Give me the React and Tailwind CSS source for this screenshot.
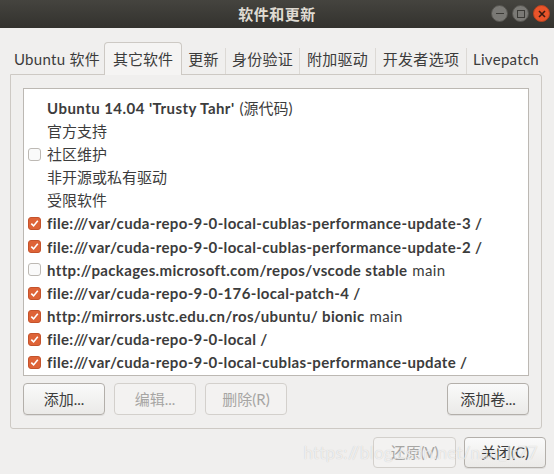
import React from "react";

const font = { fontFamily: "Lato, 'Noto Sans CJK SC', sans-serif" };

const tabs = [
  { label: "Ubuntu 软件", w: "w-[94px]" },
  { label: "其它软件", w: "w-[78px]", active: true },
  { label: "更新", w: "w-[43px]" },
  { label: "身份验证", w: "w-[73px]" },
  { label: "附加驱动", w: "w-[75px]" },
  { label: "开发者选项", w: "w-[90px]" },
  { label: "Livepatch", w: "w-[78px]" },
];

const sources = [
  { check: true, text: "file:///var/cuda-repo-9-0-local-cublas-performance-update-3 /" },
  { check: true, text: "file:///var/cuda-repo-9-0-local-cublas-performance-update-2 /" },
  { check: false, text: "http://packages.microsoft.com/repos/vscode stable", extra: "main" },
  { check: true, text: "file:///var/cuda-repo-9-0-176-local-patch-4 /" },
  { check: true, text: "http://mirrors.ustc.edu.cn/ros/ubuntu/ bionic", extra: "main" },
  { check: true, text: "file:///var/cuda-repo-9-0-local /" },
  { check: true, text: "file:///var/cuda-repo-9-0-local-cublas-performance-update /" },
];

const Checkbox = ({ checked }) =>
  checked ? (
    <div className="w-[13px] h-[13px] rounded-[3px] bg-[#de6337] border border-[#c4532c] flex items-center justify-center">
      <svg width="9" height="9" viewBox="0 0 9 9">
        <path d="M1.3 4.6 L3.6 6.9 L7.8 1.8" fill="none" stroke="#fff" strokeWidth="1.6" />
      </svg>
    </div>
  ) : (
    <div className="w-[13px] h-[13px] rounded-[3px] bg-[#fafafa] border border-[#bdb9b4]" />
  );

const Button = ({ children, disabled, className = "" }) => (
  <div
    className={`flex items-center justify-center rounded-[4px] border text-[15px] ${
      disabled
        ? "border-[#d3d0cc] bg-[#f3f2f1] text-[#a6a5a3]"
        : "border-[#b3afaa] bg-gradient-to-b from-[#fafafa] to-[#ebeae8] text-[#3c3c3c] shadow-[0_1px_0_rgba(0,0,0,0.07)]"
    } ${className}`}
  >
    {children}
  </div>
);

export default function App() {
  return (
    <div style={font} className="w-[554px] h-[474px] bg-[#f0efee] flex flex-col overflow-hidden">
      {/* title bar */}
      <div className="relative h-[28px] bg-gradient-to-b from-[#45443f] to-[#33322e] flex items-center justify-center">
        <span className="text-[15px] font-bold text-[#dfdbd2] tracking-[0.5px]">软件和更新</span>
        <div className="absolute right-[4px] top-[5px] flex gap-[4px]">
          <div className="w-[17px] h-[17px] rounded-full bg-[#7a7975] border border-[#55544f] flex items-center justify-center">
            <div className="w-[8px] h-[1.5px] bg-[#3b3a36]" />
          </div>
          <div className="w-[17px] h-[17px] rounded-full bg-[#7a7975] border border-[#55544f] flex items-center justify-center">
            <div className="w-[8px] h-[8px] border-[1.5px] border-[#3b3a36]" />
          </div>
          <div className="w-[17px] h-[17px] rounded-full bg-[#e9542a] border border-[#b8421f] flex items-center justify-center">
            <svg width="8" height="8" viewBox="0 0 8 8">
              <path d="M1 1 L7 7 M7 1 L1 7" stroke="#3b1a10" strokeWidth="1.6" />
            </svg>
          </div>
        </div>
      </div>

      {/* tabs */}
      <div className="mt-[14px] ml-[10px] flex h-[32px] text-[15px] text-[#3c3c3c]">
        {tabs.map((t, i) => (
          <div key={t.label} className="flex">
            {t.active ? (
              <div
                className={`${t.w} relative z-10 -mb-px rounded-t-[4px] border border-b-0 border-[#cdc9c4] bg-[#f5f4f3] flex items-center justify-center`}
              >
                {t.label}
              </div>
            ) : (
              <div className={`${t.w} flex items-center justify-center pt-[2px] tracking-[0.3px]`}>{t.label}</div>
            )}
            {!t.active && i < tabs.length - 1 && !tabs[i + 1].active && (
              <div className="w-px h-[26px] mt-[6px] bg-[#dcd9d5]" />
            )}
          </div>
        ))}
      </div>

      {/* notebook panel */}
      <div className="ml-[10px] w-[532px] h-[355px] border border-[#cdc9c4] rounded-b-[3px] rounded-tr-[3px] px-[12px] pt-[13px]">
        <div className="h-[288px] bg-white border border-[#bcb8b3] pt-[8px] text-[15px] text-[#3c3c3c]">
          <div className="h-[23px] flex items-center pl-[23px]">
            <span className="font-bold tracking-[0.45px]">Ubuntu 14.04 'Trusty Tahr'</span>
            <span className="ml-[5px]">(源代码)</span>
          </div>
          {["官方支持", "社区维护", "非开源或私有驱动", "受限软件"].map((s, i) => (
            <div key={s} className="h-[23px] flex items-center">
              <div className="w-[23px] pl-[4px]">{i === 1 && <Checkbox checked={false} />}</div>
              <span>{s}</span>
            </div>
          ))}
          {sources.map((s) => (
            <div key={s.text} className="h-[23.2px] flex items-center whitespace-nowrap">
              <div className="w-[23px] pl-[4px]">
                <Checkbox checked={s.check} />
              </div>
              <span className="font-bold tracking-[0.35px]">{s.text}</span>
              {s.extra && <span className="ml-[5px] tracking-[0.3px]">{s.extra}</span>}
            </div>
          ))}
        </div>
        <div className="mt-[7px] flex gap-[9px]">
          <Button className="w-[82px] h-[32px]">添加...</Button>
          <Button disabled className="w-[82px] h-[32px]">编辑...</Button>
          <Button disabled className="w-[82px] h-[32px]">删除(R)</Button>
          <Button className="w-[82px] h-[32px] ml-auto">添加卷...</Button>
        </div>
      </div>

      {/* bottom */}
      <div className="relative mt-[8px] mr-[8px] flex justify-end gap-[8px]">
        <Button disabled className="w-[83px] h-[31px]">还原(V)</Button>
        <Button className="w-[82px] h-[31px]">关闭(C)</Button>
        <div className="absolute right-[8px] top-[3px] text-[17px] text-white/70 tracking-[0.3px] pointer-events-none [text-shadow:0_0_1px_rgba(0,0,0,0.2)]">
          https://blog.csdn.net/nan_lr77
        </div>
      </div>
    </div>
  );
}
